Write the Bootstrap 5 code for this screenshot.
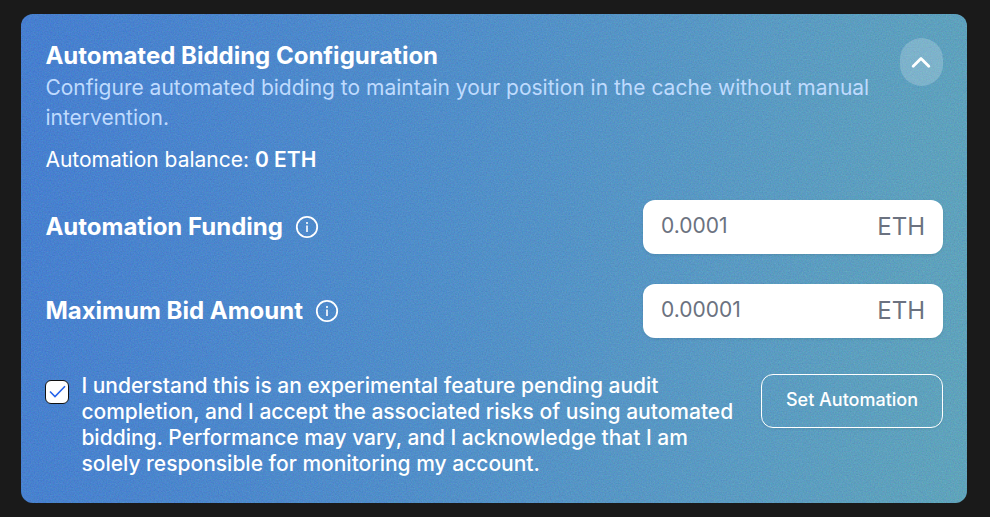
<!DOCTYPE html>
<html lang="en">
<head>
<meta charset="utf-8">
<meta name="viewport" content="width=device-width, initial-scale=1">
<title>Automated Bidding Configuration</title>
<link href="https://cdn.jsdelivr.net/npm/bootstrap@5.3.0/dist/css/bootstrap.min.css" rel="stylesheet">
<style>
body{background:#1a1a1a;font-family:Inter,sans-serif;height:517px;overflow:hidden;padding:14px 23px 14px 21px}
.panel{height:489px;border-radius:12px;background:linear-gradient(97deg,#447bd0 0%,#4f8cc9 42%,#5b9bc1 74%,#62a6b8 100%);padding:24px;color:#fff}
.grain{inset:0;width:100%;height:100%;border-radius:12px;pointer-events:none}
.panel-body{height:100%}
.intro{height:137px}
.intro-text{padding-left:.4px}
.panel-title{font-size:24px;font-weight:700;line-height:30px;margin:3px 0 2px}
.desc{font-size:21px;line-height:30px;color:#bfdbfe;margin:0 0 12px}
.balance{font-size:21px;line-height:30px;margin:0}
.toggle{width:43px;height:48px;border-radius:24px;background:rgba(255,255,255,.2);border:0}
.toggle svg{margin-right:2px}
.fields{margin-top:25px;gap:30px}
.field-label{font-size:24px;font-weight:700;line-height:54px;padding-left:.4px}
.amount{width:300px;height:54px;border-radius:12px;box-shadow:0 1px 3px rgba(0,0,0,.1)}
.amount .form-control,.amount .input-group-text{border:0;background:#fff;color:#6b7280;border-radius:12px}
.amount .form-control{font-size:21px;padding:0 0 2px 18px;box-shadow:none}
.amount .form-control::placeholder{color:#6b7280;opacity:1}
.amount .input-group-text{font-size:24px;padding:0 18px 0 0}
.confirm{margin-top:36px}
.tick{width:24px;height:24px;border-radius:6px;border:1px solid #111;background:#fff;margin:6px 12px 0 0}
.terms{width:660px;font-size:21px;font-weight:500;line-height:26px;margin-top:-1px;padding-left:.4px}
.btn-set{width:182px;height:54px;border:1px solid #fff;border-radius:12px;color:#fff;font-size:18px;font-weight:500;padding:0 0 3px;box-shadow:0 1px 3px rgba(0,0,0,.08)}
</style>
<script src="https://cdn.jsdelivr.net/npm/bootstrap@5.3.0/dist/js/bootstrap.bundle.min.js"></script>
</head>
<body>
<main class="panel position-relative">
  <svg class="grain position-absolute" aria-hidden="true">
    <filter id="noise" x="0" y="0" width="100%" height="100%" color-interpolation-filters="sRGB"><feTurbulence type="fractalNoise" baseFrequency="0.75" numOctaves="3" seed="4"/><feColorMatrix values="1 0 0 0 -0.17  0 1 0 0 0.08  0 0 1 0 0.3  0 0 0 0 0.15"/></filter>
    <rect width="100%" height="100%" filter="url(#noise)"/>
  </svg>
  <div class="panel-body position-relative">
    <header class="intro d-flex justify-content-between align-items-start">
      <div class="intro-text">
        <h1 class="panel-title">Automated Bidding Configuration</h1>
        <p class="desc">Configure automated bidding to maintain your position in the cache without manual<br>intervention.</p>
        <p class="balance">Automation balance: <span class="fw-semibold">0 ETH</span></p>
      </div>
      <button class="toggle d-flex align-items-center justify-content-center flex-shrink-0 p-0" aria-label="Collapse">
        <svg width="24" height="24" fill="none" stroke="#fff" stroke-width="2.8" stroke-linecap="round" stroke-linejoin="round"><path d="m4.2 16.2 7.8-7.8 7.8 7.8"/></svg>
      </button>
    </header>
    <div class="fields d-flex flex-column">
      <div class="d-flex justify-content-between">
        <label class="field-label d-flex align-items-center" for="funding">Automation Funding
          <svg class="ms-2" width="32" height="32" fill="none" stroke="#fff" stroke-width="1.8"><circle cx="16" cy="16" r="10.2"/><path d="M16 14.5V21M16 11v2" stroke-width="1.6"/></svg>
        </label>
        <div class="amount input-group"><input id="funding" class="form-control" placeholder="0.0001"><span class="input-group-text">ETH</span></div>
      </div>
      <div class="d-flex justify-content-between">
        <label class="field-label d-flex align-items-center" for="maxbid">Maximum Bid Amount
          <svg class="ms-2" width="32" height="32" fill="none" stroke="#fff" stroke-width="1.8"><circle cx="16" cy="16" r="10.2"/><path d="M16 14.5V21M16 11v2" stroke-width="1.6"/></svg>
        </label>
        <div class="amount input-group"><input id="maxbid" class="form-control" placeholder="0.00001"><span class="input-group-text">ETH</span></div>
      </div>
    </div>
    <div class="confirm d-flex align-items-start">
      <span class="tick flex-shrink-0 d-flex" role="checkbox" aria-checked="true" aria-labelledby="terms">
        <svg width="22" height="22" fill="none" stroke="#2563eb" stroke-width="1.6"><path d="m4 10.5 5 5L19 5.3"/></svg>
      </span>
      <div id="terms" class="terms">I understand this is an experimental feature pending audit<br>completion, and I accept the associated risks of using automated<br>bidding. Performance may vary, and I acknowledge that I am<br>solely responsible for monitoring my account.</div>
      <button class="btn btn-set ms-auto">Set Automation</button>
    </div>
  </div>
</main>
</body>
</html>
